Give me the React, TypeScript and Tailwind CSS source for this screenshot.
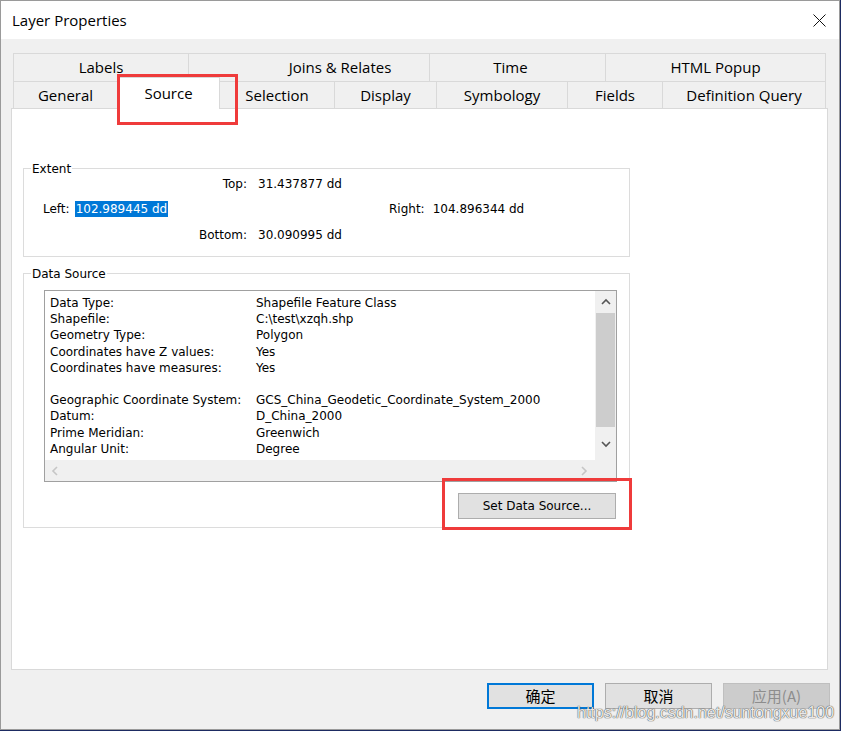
import React from "react";

const rows: [string, string][] = [
  ["Data Type:", "Shapefile Feature Class"],
  ["Shapefile:", "C:\\test\\xzqh.shp"],
  ["Geometry Type:", "Polygon"],
  ["Coordinates have Z values:", "Yes"],
  ["Coordinates have measures:", "Yes"],
  ["", ""],
  ["Geographic Coordinate System:", "GCS_China_Geodetic_Coordinate_System_2000"],
  ["Datum:", "D_China_2000"],
  ["Prime Meridian:", "Greenwich"],
  ["Angular Unit:", "Degree"],
];

function Chevron({ dir, color }: { dir: "up" | "down" | "left" | "right"; color: string }) {
  const pts =
    dir === "up"
      ? "1,6 5,2 9,6"
      : dir === "down"
      ? "1,2 5,6 9,2"
      : dir === "left"
      ? "6,1 2,5 6,9"
      : "2,1 6,5 2,9";
  return (
    <svg width="10" height="10" viewBox="0 0 10 10">
      <polyline points={pts} fill="none" stroke={color} strokeWidth="1.6" />
    </svg>
  );
}

export default function App() {
  return (
    <div className="relative w-[841px] h-[731px] bg-[#1d2b62] overflow-hidden">
      <div className="w-[840px] h-[730px] border border-[#9a9a9a] bg-[#f0f0f0] flex flex-col">
        {/* Title bar */}
        <div className="h-[38px] bg-white flex items-center justify-between pl-[11px] pr-[13px] shrink-0">
          <span className="font-['Open_Sans',sans-serif] text-[15px] text-black">Layer Properties</span>
          <svg width="13" height="13" viewBox="0 0 13 13">
            <line x1="0.5" y1="0.5" x2="12.5" y2="12.5" stroke="#111" strokeWidth="1" />
            <line x1="12.5" y1="0.5" x2="0.5" y2="12.5" stroke="#111" strokeWidth="1" />
          </svg>
        </div>

        {/* Body */}
        <div className="flex-1 pl-[10px] pt-[14px] font-['Open_Sans',sans-serif] text-[15px] text-black">
          {/* Tabs */}
          <div className="ml-[2px] w-[813px]">
            <div className="flex h-[28px]">
              <div className="w-[175px] border-t border-l border-[#d9d9d9] flex items-center justify-center">Labels</div>
              <div className="w-[241px] border-t border-l border-[#d9d9d9] flex items-center justify-center pl-[62px]">Joins &amp; Relates</div>
              <div className="w-[176px] border-t border-l border-[#d9d9d9] flex items-center justify-center pr-[14px]">Time</div>
              <div className="w-[221px] border-t border-l border-r border-[#d9d9d9] flex items-center justify-center">HTML Popup</div>
            </div>
            <div className="flex h-[27px]">
              <div className="w-[104px] border-t border-l border-[#d9d9d9] flex items-center justify-center">General</div>
              <div className="relative z-10 w-[103px] -mt-[4px] -mb-[1px] bg-white border-t border-l border-r border-[#d9d9d9] flex items-center justify-center">Source</div>
              <div className="w-[114px] border-t border-[#d9d9d9] flex items-center justify-center">Selection</div>
              <div className="w-[102px] border-t border-l border-[#d9d9d9] flex items-center justify-center">Display</div>
              <div className="w-[131px] border-t border-l border-[#d9d9d9] flex items-center justify-center">Symbology</div>
              <div className="w-[95px] border-t border-l border-[#d9d9d9] flex items-center justify-center">Fields</div>
              <div className="w-[164px] border-t border-l border-r border-[#d9d9d9] flex items-center justify-center">Definition Query</div>
            </div>
          </div>

          {/* Panel */}
          <div className="w-[817px] h-[562px] border border-[#d9d9d9] bg-white pl-[11px] pt-[59px] font-['DejaVu_Sans',sans-serif] text-[12px]">
            {/* Extent */}
            <div className="relative w-[607px] h-[89px] border border-[#dcdcdc]">
              <span className="absolute left-[7px] -top-[7px] bg-white px-[1px] leading-[14px]">Extent</span>
              <div className="pt-[7px] flex flex-col">
                <div className="h-[16px] leading-[16px] flex">
                  <span className="w-[223px] text-right">Top:</span>
                  <span className="ml-[11px]">31.437877 dd</span>
                </div>
                <div className="h-[16px] leading-[16px] flex mt-[9px]">
                  <div className="w-[365px] flex pl-[19px]">
                    <span>Left:</span>
                    <span className="ml-[5px] bg-[#0078d7] text-white px-[1px]">102.989445 dd</span>
                  </div>
                  <span>Right:</span>
                  <span className="ml-[8px]">104.896344 dd</span>
                </div>
                <div className="h-[16px] leading-[16px] flex mt-[10px]">
                  <span className="w-[223px] text-right">Bottom:</span>
                  <span className="ml-[11px]">30.090995 dd</span>
                </div>
              </div>
            </div>

            {/* Data Source */}
            <div className="relative mt-[16px] w-[607px] h-[255px] border border-[#dcdcdc] pt-[16px]">
              <span className="absolute left-[7px] -top-[7px] bg-white px-[1px] leading-[14px]">Data Source</span>
              <div className="ml-[20px] w-[573px] h-[192px] border border-[#a0a0a0] flex flex-col">
                <div className="flex h-[169px]">
                  <div className="flex-1 pl-[5px] pt-[4px] overflow-hidden">
                    <div className="grid grid-cols-[206px_1fr] auto-rows-[16.2px] leading-[16.2px] whitespace-nowrap">
                      {rows.map(([a, b], i) => (
                        <React.Fragment key={i}>
                          <span>{a}</span>
                          <span>{b}</span>
                        </React.Fragment>
                      ))}
                    </div>
                  </div>
                  <div className="w-[21px] bg-[#f0f0f0] flex flex-col">
                    <div className="h-[22px] flex items-center justify-center pt-[2px]">
                      <Chevron dir="up" color="#555" />
                    </div>
                    <div className="h-[114px] mx-[1px] bg-[#cdcdcd]" />
                    <div className="flex-1 flex items-center justify-center pt-[2px]">
                      <Chevron dir="down" color="#555" />
                    </div>
                  </div>
                </div>
                <div className="flex-1 flex bg-[#f0f0f0]">
                  <div className="w-[21px] flex items-center justify-center pl-[1px]">
                    <Chevron dir="left" color="#c6c6c6" />
                  </div>
                  <div className="flex-1" />
                  <div className="w-[21px] flex items-center justify-center">
                    <Chevron dir="right" color="#c6c6c6" />
                  </div>
                  <div className="w-[21px]" />
                </div>
              </div>
              <button className="mt-[11px] ml-[434px] w-[158px] h-[26px] bg-[#e1e1e1] border border-[#adadad] text-[12px] text-black flex items-center justify-center">
                Set Data Source...
              </button>
            </div>
          </div>

          {/* Bottom buttons */}
          <div className="mt-[13px] ml-[476px] flex gap-[11px] font-['Noto_Sans_CJK_SC',sans-serif] text-[15px]">
            <button className="w-[107px] h-[26px] border-2 border-[#0078d7] bg-[#e1e1e1] text-black flex items-center justify-center">确定</button>
            <button className="w-[107px] h-[26px] border border-[#adadad] bg-[#e1e1e1] text-black flex items-center justify-center">取消</button>
            <button className="w-[107px] h-[26px] border border-[#bfbfbf] bg-[#cccccc] text-[#8d8d8d] flex items-center justify-center">应用(A)</button>
          </div>
        </div>
      </div>

      {/* Red annotation boxes */}
      <div className="absolute left-[117px] top-[74px] w-[121px] h-[51px] border-[3px] border-[#ef3b3b] z-20" />
      <div className="absolute left-[442px] top-[478px] w-[190px] h-[52px] border-[3px] border-[#ef3b3b] z-20" />

      {/* Watermark */}
      <div className="absolute left-[577px] top-[703px] z-30 font-['Liberation_Sans',sans-serif] text-[16px] leading-[20px] text-[rgba(255,255,255,0.9)] [text-shadow:0_0_1px_#444,0_0_1px_#444] whitespace-nowrap">
        https://blog.csdn.net/suntongxue100
      </div>
    </div>
  );
}
